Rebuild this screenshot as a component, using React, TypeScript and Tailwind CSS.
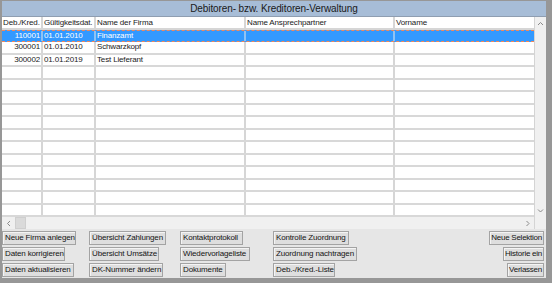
import React from "react";

const rows: string[][] = [
  ["110001", "01.01.2010", "Finanzamt"],
  ["300001", "01.01.2010", "Schwarzkopf"],
  ["300002", "01.01.2019", "Test Lieferant"],
  ...Array.from({ length: 12 }, () => ["", "", ""]),
];

function Chevron({ dir }: { dir: "up" | "down" | "left" | "right" }) {
  const d =
    dir === "up"
      ? "M1 4 L3.5 1.5 L6 4"
      : dir === "down"
      ? "M1 1.5 L3.5 4 L6 1.5"
      : dir === "left"
      ? "M4 1 L1.5 3.5 L4 6"
      : "M1.5 1 L4 3.5 L1.5 6";
  const vb = dir === "up" || dir === "down" ? "0 0 7 5.5" : "0 0 5.5 7";
  const cls = dir === "up" || dir === "down" ? "w-[7px] h-[5.5px]" : "w-[5.5px] h-[7px]";
  return (
    <svg viewBox={vb} className={cls}>
      <path d={d} fill="none" stroke="#8a8a8a" strokeWidth="1" />
    </svg>
  );
}

function Btn({ label, w }: { label: string; w: string }) {
  return (
    <div
      className={`${w} h-[14px] bg-[#dedede] border border-[#a3a3a3] shadow-[inset_1px_1px_0_#f4f4f4] flex items-center pl-[2px] whitespace-nowrap text-[#141414] leading-[12px]`}
    >
      {label}
    </div>
  );
}

function RBtn({ label }: { label: string }) {
  return (
    <div className="h-[14px] bg-[#dedede] border border-[#a3a3a3] shadow-[inset_1px_1px_0_#f4f4f4] flex items-center px-[1px] whitespace-nowrap text-[#141414] leading-[12px] tracking-[-0.25px]">
      {label}
    </div>
  );
}

export default function App() {
  return (
    <div
      className="w-[552px] h-[283px] flex flex-col bg-[#e6e6e6] border-t border-l-2 border-r-[6px] border-b-[5px] border-[#979797] text-[8px] tracking-[-0.15px] text-[#1a1a1a] overflow-hidden"
      style={{ fontFamily: '"Liberation Sans", Arial, sans-serif' }}
    >
      {/* title */}
      <div className="h-[16px] shrink-0 bg-[#a7bdd7] border-b border-[#8f9eb1] flex items-center justify-center text-[10px] tracking-[-0.1px] text-[#1a1a1a] leading-[14px]">
        Debitoren- bzw. Kreditoren-Verwaltung
      </div>

      {/* grid */}
      <div className="flex shrink-0 bg-white">
        <div className="w-[532px] flex flex-col">
          {/* header */}
          <div className="h-[13px] flex border-b-2 border-[#d6d6d6] leading-[11px]">
            <div className="w-[41px] border-r-2 border-[#d6d6d6] pl-[1px] whitespace-nowrap overflow-hidden">Deb./Kred.</div>
            <div className="w-[53px] border-r-2 border-[#d6d6d6] pl-[1px] whitespace-nowrap overflow-hidden">Gültigkeitsdat.</div>
            <div className="w-[150px] border-r-2 border-[#d6d6d6] pl-[1px] whitespace-nowrap overflow-hidden">Name der Firma</div>
            <div className="w-[149px] border-r-2 border-[#d6d6d6] pl-[1px] whitespace-nowrap overflow-hidden">Name Ansprechpartner</div>
            <div className="w-[139px] pl-[1px] whitespace-nowrap overflow-hidden">Vorname</div>
          </div>
          {rows.map((r, i) => {
            const sel = i === 0;
            const h = i % 2 === 0 ? "h-[12px]" : "h-[13px]";
            if (sel) {
              return (
                <div
                  key={i}
                  className={`${h} flex bg-[#3399ff] text-white border-y border-dashed border-[#f0875a] leading-[10px]`}
                >
                  <div className="w-[41px] border-r-2 border-[#8fc2f5] pr-[1px] text-right">{r[0]}</div>
                  <div className="w-[53px] border-r-2 border-[#8fc2f5] pl-[1px]">{r[1]}</div>
                  <div className="w-[150px] border-r-2 border-[#8fc2f5] pl-[1px]">{r[2]}</div>
                  <div className="w-[149px] border-r-2 border-[#8fc2f5]"></div>
                  <div className="w-[139px]"></div>
                </div>
              );
            }
            return (
              <div key={i} className={`${h} flex border-b-2 border-[#d8d8d8] leading-[10px]`}>
                <div className="w-[41px] border-r-2 border-[#d6d6d6] pr-[1px] text-right">{r[0]}</div>
                <div className="w-[53px] border-r-2 border-[#d6d6d6] pl-[1px]">{r[1]}</div>
                <div className="w-[150px] border-r-2 border-[#d6d6d6] pl-[1px]">{r[2]}</div>
                <div className="w-[149px] border-r-2 border-[#d6d6d6]"></div>
                <div className="w-[139px]"></div>
              </div>
            );
          })}
        </div>
        {/* vertical scrollbar */}
        <div className="w-[12px] bg-[#f0f0f0] border-l border-[#d4d4d4] flex flex-col justify-between">
          <div className="h-[13px] flex items-center justify-center">
            <Chevron dir="up" />
          </div>
          <div className="h-[12px] flex items-center justify-center">
            <Chevron dir="down" />
          </div>
        </div>
      </div>

      {/* horizontal scrollbar */}
      <div className="h-[12px] shrink-0 flex bg-[#f0f0f0]">
        <div className="w-[532px] flex">
          <div className="w-[13px] flex items-center justify-center">
            <Chevron dir="left" />
          </div>
          <div className="w-[11px] bg-[#dadada] border border-[#cfcfcf]"></div>
          <div className="flex-1"></div>
          <div className="w-[13px] flex items-center justify-center">
            <Chevron dir="right" />
          </div>
        </div>
        <div className="w-[12px] bg-[#f0f0f0] border-l border-[#d4d4d4]"></div>
      </div>

      {/* buttons */}
      <div className="flex-1 grid grid-cols-[87px_91px_93px_1fr_auto] grid-rows-[14px_14px_14px] gap-y-[2px] pt-[2px] pr-[2px]">
        <Btn label="Neue Firma anlegen" w="w-[74px]" />
        <Btn label="Übersicht Zahlungen" w="w-[77px]" />
        <Btn label="Kontaktprotokoll" w="w-[63px]" />
        <Btn label="Kontrolle Zuordnung" w="w-[76px]" />
        <div className="flex justify-end">
          <RBtn label="Neue Selektion" />
        </div>

        <Btn label="Daten korrigieren" w="w-[63px]" />
        <Btn label="Übersicht Umsätze" w="w-[70px]" />
        <Btn label="Wiedervorlageliste" w="w-[70px]" />
        <Btn label="Zuordnung nachtragen" w="w-[84px]" />
        <div className="flex justify-end">
          <RBtn label="Historie ein" />
        </div>

        <Btn label="Daten aktualisieren" w="w-[72px]" />
        <Btn label="DK-Nummer ändern" w="w-[74px]" />
        <Btn label="Dokumente" w="w-[46px]" />
        <Btn label="Deb.-/Kred.-Liste" w="w-[62px]" />
        <div className="flex justify-end">
          <RBtn label="Verlassen" />
        </div>
      </div>
    </div>
  );
}
